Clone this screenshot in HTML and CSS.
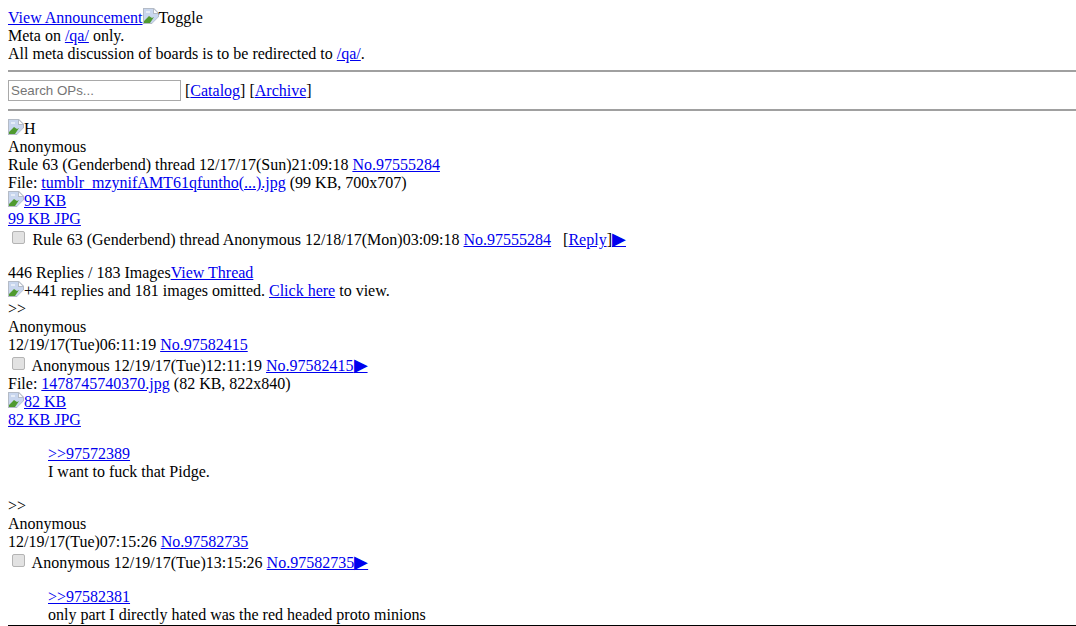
FILE: index.html
```html
<!DOCTYPE html>
<html>
<head>
<meta charset="utf-8">
<title>Board</title>
<link rel="stylesheet" href="styles.css">
</head>
<body>
<svg class="defs" aria-hidden="true"><symbol id="broken" viewBox="0 0 16 16"><path d="M0 0h11l5 5v4l-7 7H0z" fill="#b4bbc6"/><path d="M1 1h9v5h5v3l-6 6H1z" fill="#c8d6ee"/><path d="M11 1.500V5h3.500z" fill="#fff"/><path d="M1 15v-2l5-5 3 2 2-1-4 6z" fill="#4f9a2f"/><path d="M3 3h4v2H3z" fill="#e6edf8"/><path d="M16 9l-7 7h7z" fill="#fff"/></symbol></svg>
<div><a href="#">View Announcement</a><svg class="bi" viewBox="0 0 16 16"><use href="#broken"/></svg>Toggle</div>
<div>Meta on <a href="#">/qa/</a> only.</div>
<div>All meta discussion of boards is to be redirected to <a href="#">/qa/</a>.</div>
<hr class="rule upper">
<div class="search"><input class="box" placeholder="Search OPs..."> [<a href="#">Catalog</a>] [<a href="#">Archive</a>]</div>
<hr class="rule lower">
<div><svg class="bi" viewBox="0 0 16 16"><use href="#broken"/></svg>H</div>
<div>Anonymous</div>
<div>Rule 63 (Genderbend) thread 12/17/17(Sun)21:09:18 <a href="#">No.97555284</a></div>
<div>File: <a href="#">tumblr_mzynifAMT61qfuntho(...).jpg</a> (99 KB, 700x707)</div>
<div><a href="#"><svg class="bi" viewBox="0 0 16 16"><use href="#broken"/></svg>99 KB</a></div>
<div><a href="#">99 KB JPG</a></div>
<div class="check op"><input type="checkbox" class="tick"> Rule 63 (Genderbend) thread Anonymous 12/18/17(Mon)03:09:18 <a href="#">No.97555284</a> &nbsp; [<a href="#">Reply</a>]<a href="#"><span class="arrow">▶</span></a></div>
<div>446 Replies / 183 Images<a href="#">View Thread</a></div>
<div><svg class="bi" viewBox="0 0 16 16"><use href="#broken"/></svg>+441 replies and 181 images omitted. <a href="#">Click here</a> to view.</div>
<div>&gt;&gt;</div>
<div>Anonymous</div>
<div>12/19/17(Tue)06:11:19 <a href="#">No.97582415</a></div>
<div class="check"><input type="checkbox" class="tick"> Anonymous 12/19/17(Tue)12:11:19 <a href="#">No.97582415</a><a href="#"><span class="arrow">▶</span></a></div>
<div>File: <a href="#">1478745740370.jpg</a> (82 KB, 822x840)</div>
<div><a href="#"><svg class="bi" viewBox="0 0 16 16"><use href="#broken"/></svg>82 KB</a></div>
<div><a href="#">82 KB JPG</a></div>
<blockquote class="quote"><a href="#">&gt;&gt;97572389</a><br>I want to fuck that Pidge.</blockquote>
<div>&gt;&gt;</div>
<div>Anonymous</div>
<div>12/19/17(Tue)07:15:26 <a href="#">No.97582735</a></div>
<div class="check"><input type="checkbox" class="tick"> Anonymous 12/19/17(Tue)13:15:26 <a href="#">No.97582735</a><a href="#"><span class="arrow">▶</span></a></div>
<blockquote class="quote last"><a href="#">&gt;&gt;97582381</a><br>only part I directly hated was the red headed proto minions</blockquote>
<div class="edge"></div>
</body>
</html>
```

FILE: styles.css
```css
html { height: 626px; overflow: hidden; }
body { margin: 8px 0 8px 8px; padding-top: 1px; font-family: "Liberation Serif", "Times New Roman", serif; font-size: 16px; line-height: 18px; color: #000; background: #fff; }
a { color: #0000ee; }
.defs { display: none; }
.bi { display: inline-block; width: 16px; height: 16px; margin-top: -1px; vertical-align: -1px; }
.rule { margin: 8px 0; border: 0; border-top: 2px solid #a0a0a0; }
.upper { margin-top: 7px; }
.lower { margin-bottom: 9px; }
.search { height: 21px; line-height: 21px; }
.box { width: 173px; height: 21px; box-sizing: border-box; border: 1px solid #a9a9a9; padding: 1px 2px; font: 13.33px "Liberation Sans", Arial, sans-serif; vertical-align: top; }
.box::placeholder { color: #757575; }
.tick { appearance: none; margin: 0 3.5px 1px 4px; width: 13px; height: 13px; border: 1px solid #b4b4b4; border-radius: 2px; background: #e2e2e2; vertical-align: baseline; }
.check { height: 18px; padding-top: 3px; }
.op { margin-bottom: 15px; }
.arrow { font-size: 18px; line-height: 0; }
.quote { margin: 16px 40px; }
.last { margin-bottom: 1px; }
.edge { height: 1px; margin-left: -8px; background: #000; }
```
